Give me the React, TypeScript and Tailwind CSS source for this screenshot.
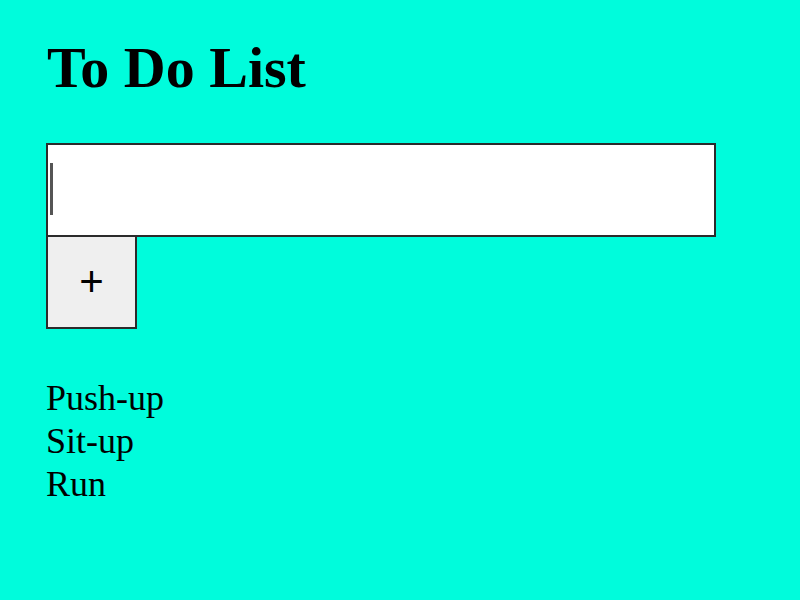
import { useState } from "react";

export default function App() {
  const [task, setTask] = useState("");
  const [todos, setTodos] = useState<string[]>(["Push-up", "Sit-up", "Run"]);

  function addTodo() {
    const t = task.trim();
    if (!t) return;
    setTodos([...todos, t]);
    setTask("");
  }

  return (
    <div className="min-h-screen w-full bg-[#00fcdc] px-[46px] pt-[36px] text-black [font-family:'Liberation_Serif','Times_New_Roman',serif]">
      <h1 className="pl-[1px] text-[58px] font-bold leading-[64px]">To Do List</h1>

      <div className="mt-[43px] flex flex-col items-start">
        <div className="relative">
          <input
            value={task}
            onChange={(e) => setTask(e.target.value)}
            className="block h-[94px] w-[670px] border-2 border-[#2b2b2b] bg-white px-1 text-[44px] outline-none"
          />
          {/* caret as seen in the screenshot */}
          {task === "" && (
            <span className="pointer-events-none absolute left-[4px] top-[20px] h-[52px] w-[3px] bg-[#555]" />
          )}
        </div>
        <button
          type="button"
          onClick={addTodo}
          className="flex h-[92px] w-[91px] items-center justify-center border-2 border-t-0 border-[#2b2b2b] bg-[#efefef] text-[42px] leading-none [font-family:'Liberation_Sans',Arial,sans-serif]"
        >
          +
        </button>
      </div>

      <ul className="mt-[48px] text-[36px] leading-[43px]">
        {todos.map((t) => (
          <li key={t}>{t}</li>
        ))}
      </ul>
    </div>
  );
}
